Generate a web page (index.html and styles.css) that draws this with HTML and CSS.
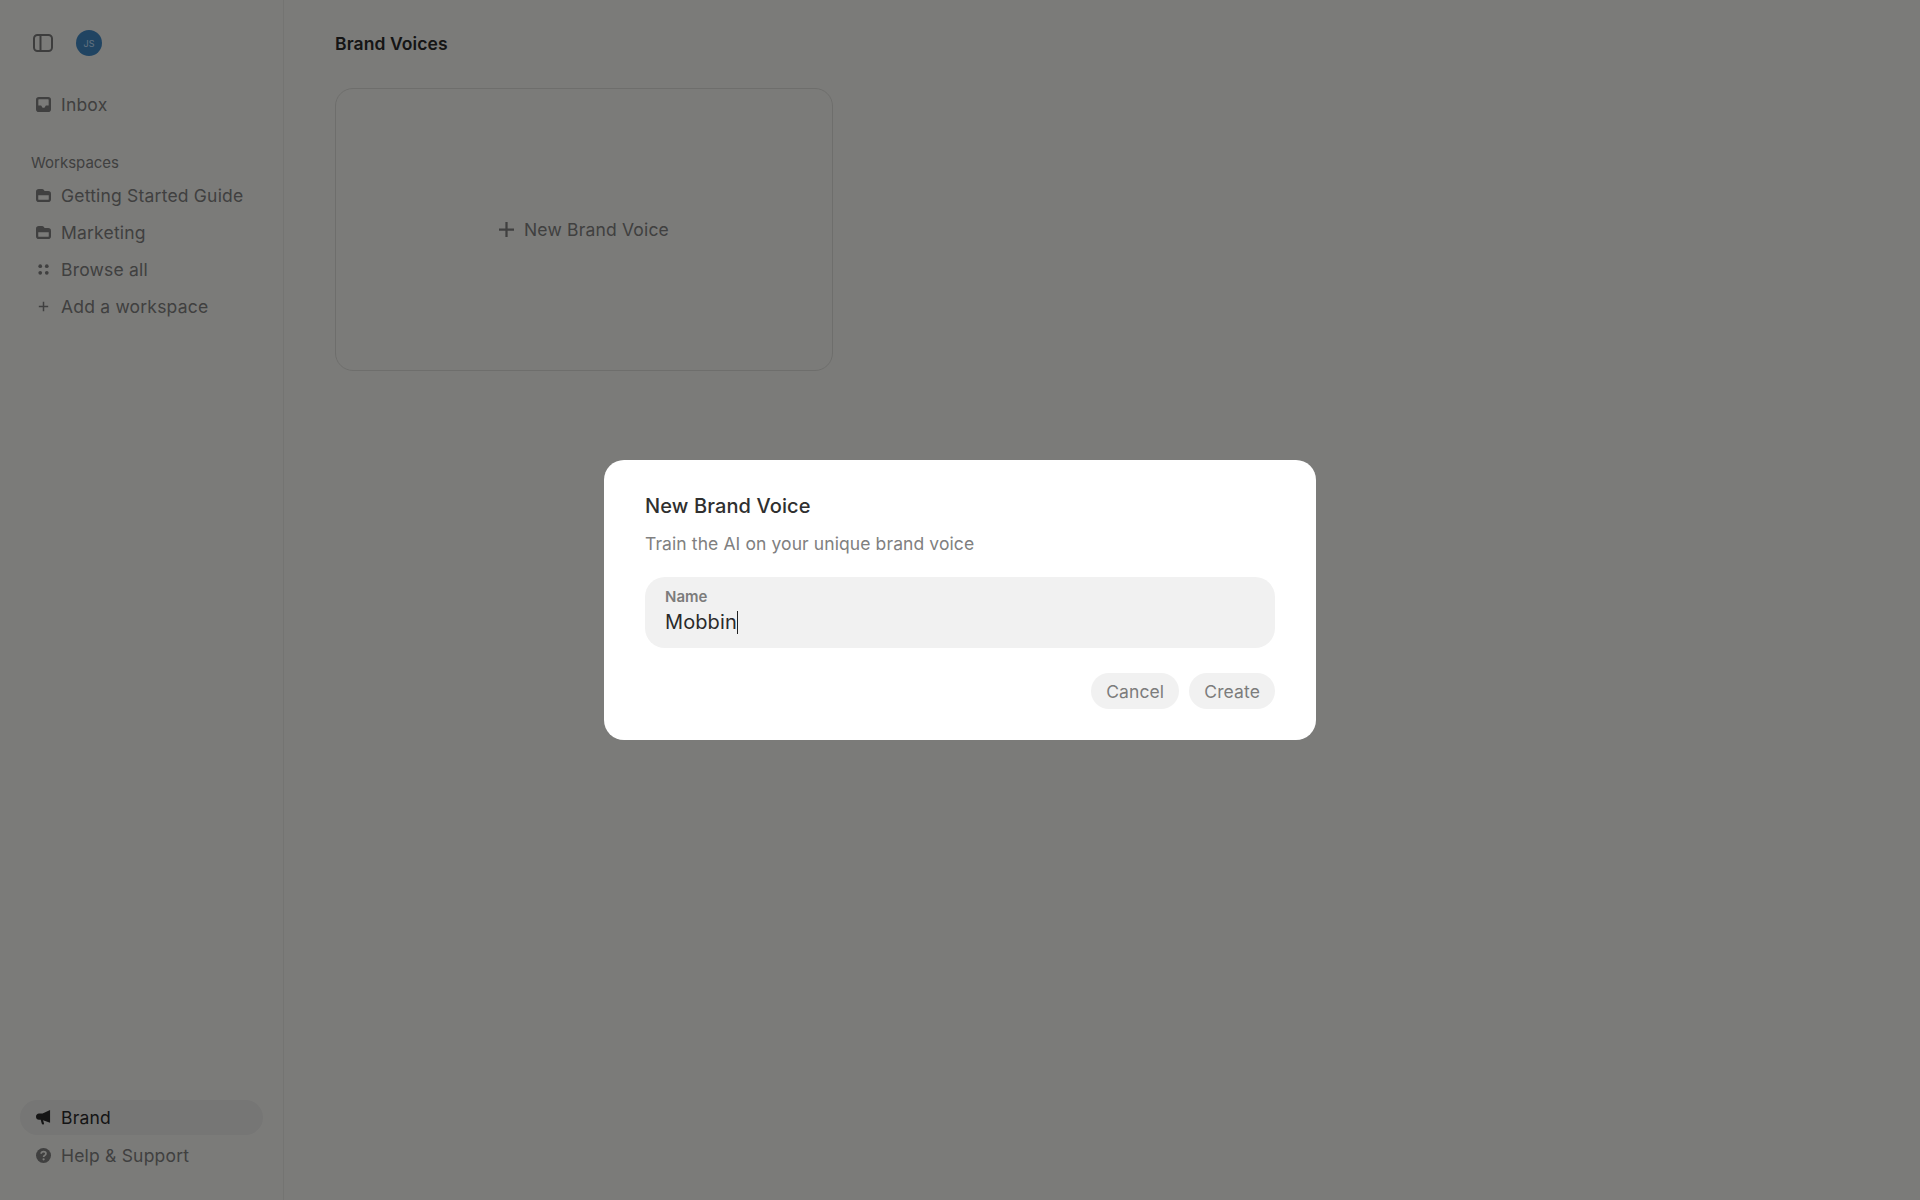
FILE: index.html
```html
<!DOCTYPE html>
<html lang="en">
<head>
<meta charset="utf-8">
<title>Brand Voices</title>
<link rel="stylesheet" href="styles.css">
</head>
<body>
<div class="app">
  <aside class="sidebar">
    <div class="top-bar">
      <svg class="panel-icon" viewBox="0 0 20 18" width="20" height="18"><rect x="1" y="1" width="18" height="16" rx="3.5" fill="none" stroke="currentColor" stroke-width="2"/><path d="M7.5 1v16" stroke="currentColor" stroke-width="2"/></svg>
      <div class="avatar">JS</div>
    </div>
    <nav class="nav-inbox">
      <a class="nav-row">
        <svg class="icon" viewBox="0 0 16 16"><path fill-rule="evenodd" d="M3 0h10a3 3 0 0 1 3 3v10a3 3 0 0 1-3 3H3a3 3 0 0 1-3-3V3a3 3 0 0 1 3-3zM2.500 3v6H5.500l1.500 2.500h2L10.500 9h3V3a.5.5 0 0 0-.5-.5H3a.5.5 0 0 0-.5.5z" fill="currentColor"/></svg>
        <span>Inbox</span>
      </a>
    </nav>
    <div class="section-label">Workspaces</div>
    <nav class="nav-list">
      <a class="nav-row">
        <svg class="icon" viewBox="0 0 16 16"><path fill-rule="evenodd" d="M3 1h3.600c.6 0 1.100.3 1.400.7L9.200 3.300H13a3 3 0 0 1 3 3V12a3 3 0 0 1-3 3H3a3 3 0 0 1-3-3V4a3 3 0 0 1 3-3zm-.6 6.800V12c0 .3.300.6.600.6h10c.3 0 .6-.3.600-.6V7.800z" fill="currentColor"/></svg>
        <span>Getting Started Guide</span>
      </a>
      <a class="nav-row">
        <svg class="icon" viewBox="0 0 16 16"><path fill-rule="evenodd" d="M3 1h3.600c.6 0 1.100.3 1.400.7L9.200 3.300H13a3 3 0 0 1 3 3V12a3 3 0 0 1-3 3H3a3 3 0 0 1-3-3V4a3 3 0 0 1 3-3zm-.6 6.800V12c0 .3.300.6.600.6h10c.3 0 .6-.3.600-.6V7.800z" fill="currentColor"/></svg>
        <span>Marketing</span>
      </a>
      <a class="nav-row">
        <svg class="icon" viewBox="0 0 16 16"><g fill="currentColor"><circle cx="4.500" cy="4.500" r="2"/><circle cx="11.500" cy="4.500" r="2"/><circle cx="4.500" cy="11.500" r="2"/><circle cx="11.500" cy="11.500" r="2"/></g></svg>
        <span>Browse all</span>
      </a>
      <a class="nav-row">
        <svg class="icon" viewBox="0 0 16 16"><path d="M8 3v10M3 8h10" stroke="currentColor" stroke-width="1.600" fill="none"/></svg>
        <span>Add a workspace</span>
      </a>
    </nav>
    <nav class="nav-bottom">
      <a class="nav-row nav-row-active">
        <svg class="icon" viewBox="0 0 16 16"><path d="M15 0v13.500L7.500 10.800l1 3.200c.2.700-.3 1.500-1.100 1.500-.6 0-1.100-.4-1.300-1L5 10.300H3.200C1.400 10.300 0 9 0 7.100 0 5.200 1.400 3.800 3.200 3.800H7z" fill="currentColor"/></svg>
        <span>Brand</span>
      </a>
      <a class="nav-row">
        <svg class="icon" viewBox="0 0 16 16"><circle cx="8" cy="8" r="8" fill="currentColor"/><path d="M5.500 6.100c.1-1.400 1.200-2.200 2.600-2.200s2.500.9 2.500 2.100c0 1.800-2.500 1.800-2.500 3.500" fill="none" stroke="#f7f7f3" stroke-width="1.800"/><circle cx="8.100" cy="12" r="1.200" fill="#f7f7f3"/></svg>
        <span>Help &amp; Support</span>
      </a>
    </nav>
  </aside>
  <main class="main">
    <h1 class="page-title">Brand Voices</h1>
    <button class="new-card" type="button">
      <svg class="new-card-plus" viewBox="0 0 16 16"><path d="M8 0v16M0 8h16" stroke="currentColor" stroke-width="2.400" fill="none"/></svg>
      <span>New Brand Voice</span>
    </button>
  </main>
</div>
<div class="overlay">
  <section class="modal">
    <h2 class="modal-title">New Brand Voice</h2>
    <p class="modal-sub">Train the AI on your unique brand voice</p>
    <div class="field">
      <div class="field-label">Name</div>
      <div class="field-value"><span>Mobbin</span><i class="caret"></i></div>
    </div>
    <div class="actions">
      <button class="btn" type="button">Cancel</button>
      <button class="btn" type="button">Create</button>
    </div>
  </section>
</div>
</body>
</html>
```
FILE: styles.css
```css
* { box-sizing: border-box; }
html, body { margin: 0; height: 100%; }
body {
  font-family: Inter, "Liberation Sans", sans-serif;
  background: #f7f7f3;
  color: #262626;
  overflow: hidden;
}
.app { display: flex; height: 1200px; }
.sidebar {
  width: 284px;
  flex: none;
  border-right: 1px solid #e8e8e4;
  display: flex;
  flex-direction: column;
  padding: 30px 20px 26px;
}
.top-bar { display: flex; align-items: center; height: 26px; padding-left: 13px; gap: 23px; color: #7a7a7a; }
.panel-icon { display: block; }
.avatar {
  width: 26px; height: 26px; border-radius: 50%;
  background: #4088c4; color: #c7e4ff;
  font-size: 9px; display: flex; align-items: center; justify-content: center;
}
.nav-inbox { margin-top: 30px; }
.nav-row {
  display: flex; align-items: center; height: 37px;
  padding-left: 16px; gap: 10px;
  font-size: 17.500px; letter-spacing: .2px; color: #808080;
}
.icon { width: 15px; height: 15px; flex: none; }
.section-label { margin: 29px 0 0 11px; font-size: 15px; line-height: 21px; color: #808080; font-weight: 400; height: 25px; }
.nav-bottom { margin-top: auto; display: flex; flex-direction: column; gap: 2px; }
.nav-row-active { background: #ececea; border-radius: 18px; height: 35px; color: #2a2a2a; }
.main { flex: 1; padding: 30px 0 0 51px; }
.page-title { margin: 0; font-size: 17.500px; line-height: 27px; font-weight: 600; color: #2a2a2a; letter-spacing: .1px; }
.new-card {
  margin-top: 31px; width: 498px; height: 283px;
  display: flex; align-items: center; justify-content: center; gap: 10px;
  background: transparent; border: 1px solid #dcdcd8; border-radius: 18px;
  color: #808080; font: inherit; font-size: 17.500px; letter-spacing: .18px;
}
.new-card-plus { width: 15px; height: 15px; flex: none; }
.overlay {
  position: fixed; inset: 0;
  background: rgba(0,0,0,.5);
  display: flex; align-items: center; justify-content: center;
}
.modal {
  width: 712px; height: 280px;
  background: #fff; border-radius: 20px;
  padding: 33px 41px 0;
  display: flex; flex-direction: column;
}
.modal-title { margin: 0; font-size: 20px; line-height: 26px; font-weight: 500; color: #2f2f2f; letter-spacing: .12px; }
.modal-sub { margin: 13px 0 0; font-size: 17.500px; line-height: 24px; color: #808080; letter-spacing: .1px; }
.field {
  margin-top: 21px; height: 71px; background: #f1f1f1; border-radius: 20px;
  padding: 11px 20px 0;
}
.field-label { font-size: 15px; line-height: 18px; font-weight: 600; color: #7c7c7c; }
.field-value { display: flex; align-items: center; height: 30px; font-size: 20px; letter-spacing: .1px; color: #2a2a2a; margin-top: 1px; }
.caret { width: 1.500px; height: 23px; background: #222; }
.actions { margin-top: 25px; display: flex; justify-content: flex-end; gap: 10px; }
.btn {
  height: 36px; border: 0; border-radius: 18px; background: #f1f1f1;
  padding: 0 15px; color: #7c7c7c; font: inherit; font-size: 17.500px; letter-spacing: .12px;
}
```
